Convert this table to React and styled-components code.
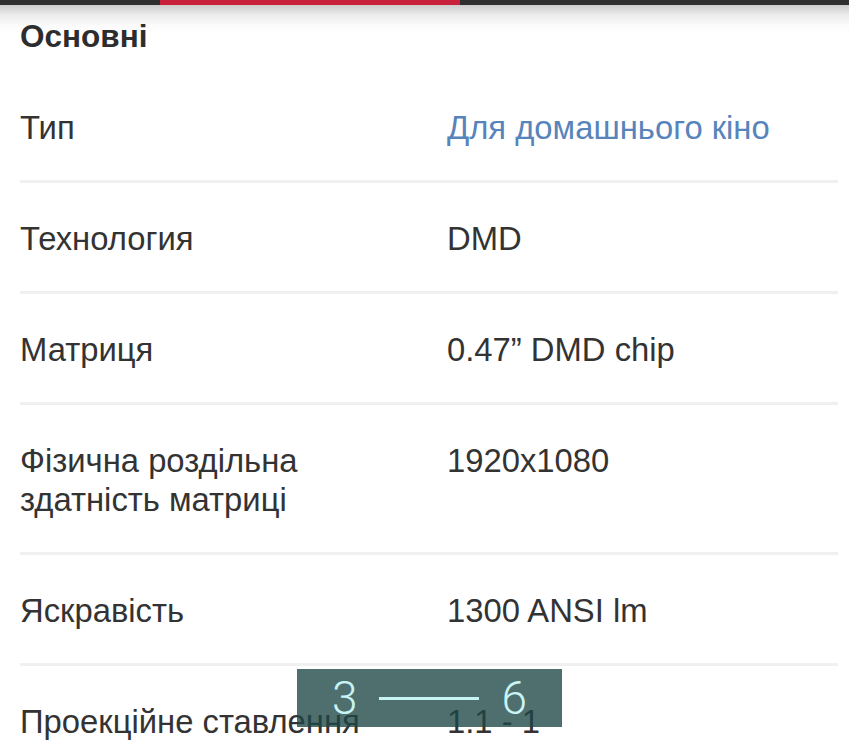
import React from 'react';
import styled, { createGlobalStyle } from 'styled-components';

const specs = [
  { label: 'Тип', value: 'Для домашнього кіно', link: true },
  { label: 'Технология', value: 'DMD' },
  { label: 'Матриця', value: '0.47” DMD chip' },
  { label: 'Фізична роздільна здатність матриці', value: '1920x1080' },
  { label: 'Яскравість', value: '1300 ANSI lm' },
  { label: 'Проекційне ставлення', value: '1.1 - 1' },
];

const App = () => (
  <Page>
    <GlobalStyle />
    <TopBar>
      <Indicator />
    </TopBar>
    <Section>
      <Title>Основні</Title>
      <List>
        {specs.map(s => (
          <Row key={s.label}>
            <Label>{s.label}</Label>
            <Value $link={s.link}>{s.value}</Value>
          </Row>
        ))}
      </List>
    </Section>
    <Range>
      <Num>3</Num>
      <Dash />
      <Num>6</Num>
    </Range>
  </Page>
);

const GlobalStyle = createGlobalStyle`
  html, body {
    margin: 0;
    padding: 0;
    background: #fff;
  }
  body {
    font-family: 'Liberation Sans', Arial, sans-serif;
    color: #333;
  }
`;

const Page = styled.div`
  position: relative;
  width: 849px;
  height: 742px;
  overflow: hidden;
  background: #fff;
`;

const TopBar = styled.div`
  height: 5px;
  background: #2e2e2e;
  display: flex;
`;

const Indicator = styled.span`
  margin-left: 160px;
  width: 300px;
  background: #c8203a;
`;

const Section = styled.section`
  background: linear-gradient(#cbcbcb 0, #ececec 10px, #fafafa 20px, #fff 28px);
  padding: 12px 11px 0 20px;
`;

const Title = styled.h2`
  margin: 0 0 17px;
  font-size: 31.5px;
  line-height: 38px;
  font-weight: 700;
  color: #2d2d2d;
`;

const List = styled.div`
  display: flex;
  flex-direction: column;
`;

const Row = styled.div`
  display: grid;
  grid-template-columns: 427px 1fr;
  padding: 36px 0 33px;
  border-bottom: 3px solid #f0f0f0;
  font-size: 32.8px;
  line-height: 39px;
`;

const Label = styled.div`
  color: #333;
  padding-right: 40px;
`;

const Value = styled.div`
  color: ${p => (p.$link ? '#5784ba' : '#333')};
`;

const Range = styled.div`
  position: absolute;
  left: 297px;
  top: 669px;
  width: 265px;
  height: 58px;
  box-sizing: border-box;
  padding-left: 35px;
  display: flex;
  align-items: center;
  background: rgba(30, 70, 70, 0.78);
`;

const Num = styled.span`
  font-family: Roboto, 'Liberation Sans', sans-serif;
  font-weight: 300;
  font-size: 46px;
  line-height: 1;
  color: #c9f4f4;
`;

const Dash = styled.span`
  width: 100px;
  height: 3px;
  margin: 0 23px 0 21px;
  background: #c9f4f4;
`;

export default App;
